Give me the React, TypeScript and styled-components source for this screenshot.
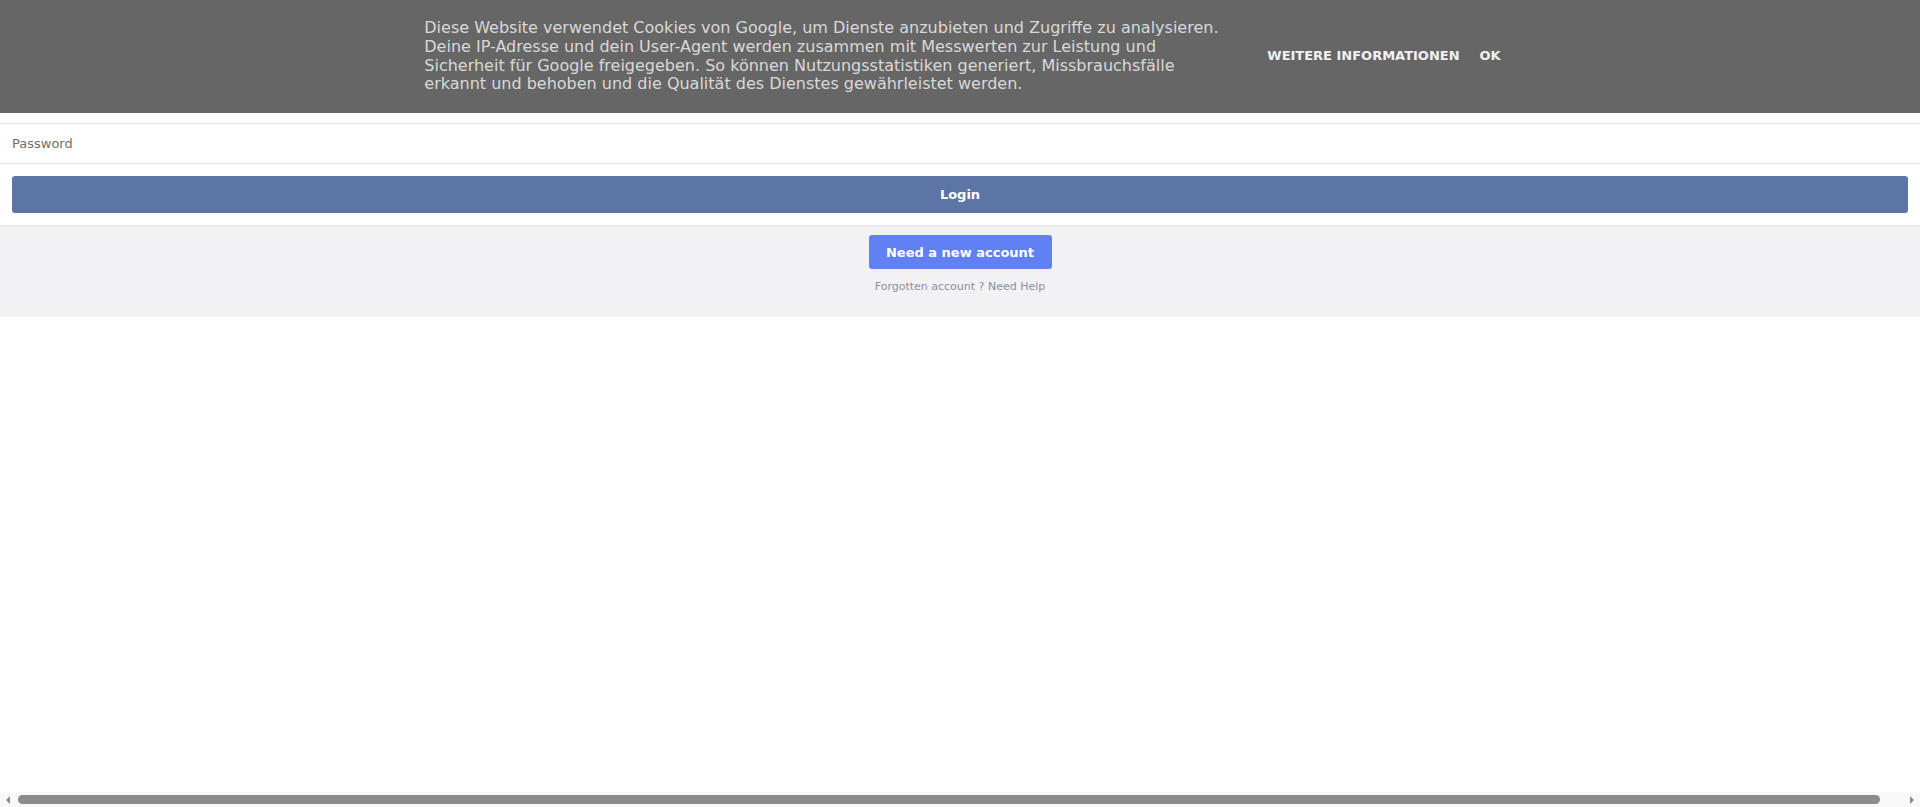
import * as React from "react";
import styled, { createGlobalStyle } from "styled-components";

const GlobalStyle = createGlobalStyle`
  html, body {
    margin: 0;
    padding: 0;
    background: #ffffff;
    font-family: "DejaVu Sans", Verdana, sans-serif;
  }
`;

const CookieBar = styled.div`
  height: 113px;
  padding-left: 5px;
  background: #666666;
  display: flex;
  align-items: center;
  justify-content: center;
  gap: 43px;
`;

const CookieText = styled.p`
  margin: 0;
  width: 800px;
  font-size: 16px;
  line-height: 18.8px;
  color: #d9d9d9;
`;

const CookieActions = styled.div`
  display: flex;
  align-items: center;
  gap: 20px;
  margin-bottom: 2px;
`;

const CookieLink = styled.a`
  font-size: 13px;
  font-weight: bold;
  text-transform: uppercase;
  color: #f2f2f2;
  text-decoration: none;
  cursor: pointer;
`;

const Form = styled.form`
  margin: 0;
  padding-top: 10px;
`;

const Field = styled.input`
  display: block;
  box-sizing: border-box;
  width: 100%;
  height: 41px;
  margin: 0;
  padding: 0 12px;
  border: none;
  border-top: 1px solid #e6e6e6;
  border-bottom: 1px solid #e6e6e6;
  font-family: "DejaVu Sans", Verdana, sans-serif;
  font-size: 13px;
  outline: none;

  &::placeholder {
    color: #786b61;
  }
`;

const SubmitRow = styled.div`
  padding: 12px;
  border-bottom: 1px solid #e6e6e6;
`;

const SubmitButton = styled.button<{ $tone?: "primary" | "accent" }>`
  display: block;
  box-sizing: border-box;
  border: none;
  border-radius: 3px;
  color: #ffffff;
  font-family: "DejaVu Sans", Verdana, sans-serif;
  font-weight: bold;
  font-size: 13px;
  cursor: pointer;
  background: ${({ $tone }) => ($tone === "accent" ? "#6180f3" : "#5d74a7")};
  width: ${({ $tone }) => ($tone === "accent" ? "183px" : "100%")};
  height: ${({ $tone }) => ($tone === "accent" ? "34px" : "37px")};
`;

const Footer = styled.div`
  background: #f2f2f4;
  display: flex;
  flex-direction: column;
  align-items: center;
  padding: 9px 0 0;
  height: 91px;
  box-sizing: border-box;
`;

const HelpLink = styled.a`
  margin-top: 11px;
  font-size: 11px;
  color: #8a90a0;
  text-decoration: none;
  cursor: pointer;
`;

/* window scrollbar as it appears in the capture */
const ScrollTrack = styled.div`
  position: fixed;
  left: 0;
  right: 0;
  bottom: 0;
  height: 15px;
  background: #f8f8f8;
  display: flex;
  align-items: center;
  gap: 8px;
  padding: 0 6px;
`;

const ScrollArrow = styled.span<{ $dir: "left" | "right" }>`
  width: 0;
  height: 0;
  border-top: 4px solid transparent;
  border-bottom: 4px solid transparent;
  ${({ $dir }) =>
    $dir === "left"
      ? "border-right: 4px solid #8a8a8a;"
      : "border-left: 4px solid #8a8a8a; margin-left: 22px;"}
`;

const ScrollThumb = styled.div`
  flex: 1;
  height: 9px;
  border-radius: 5px;
  background: #8b8b8b;
`;

export default function App() {
  return (
    <>
      <GlobalStyle />
      <CookieBar>
        <CookieText>
          Diese Website verwendet Cookies von Google, um Dienste anzubieten und
          Zugriffe zu analysieren. Deine IP-Adresse und dein User-Agent werden
          zusammen mit Messwerten zur Leistung und Sicherheit für Google
          freigegeben. So können Nutzungsstatistiken generiert, Missbrauchsfälle
          erkannt und behoben und die Qualität des Dienstes gewährleistet werden.
        </CookieText>
        <CookieActions>
          <CookieLink>Weitere Informationen</CookieLink>
          <CookieLink>OK</CookieLink>
        </CookieActions>
      </CookieBar>
      <Form onSubmit={(e) => e.preventDefault()}>
        <Field type="password" placeholder="Password" />
        <SubmitRow>
          <SubmitButton type="submit">Login</SubmitButton>
        </SubmitRow>
        <Footer>
          <SubmitButton type="button" $tone="accent">
            Need a new account
          </SubmitButton>
          <HelpLink>Forgotten account ? Need Help</HelpLink>
        </Footer>
      </Form>
      <ScrollTrack>
        <ScrollArrow $dir="left" />
        <ScrollThumb />
        <ScrollArrow $dir="right" />
      </ScrollTrack>
    </>
  );
}
